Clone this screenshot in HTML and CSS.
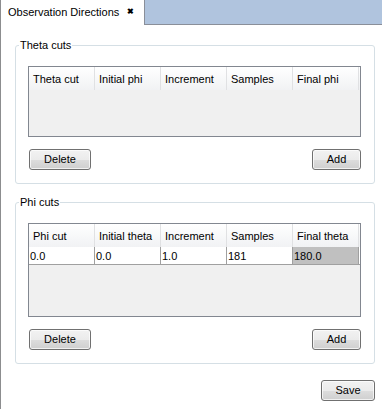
FILE: index.html
```html
<!DOCTYPE html>
<html>
<head>
<meta charset="utf-8">
<link rel="stylesheet" href="styles.css">
</head>
<body>
<div class="page">
  <div class="tabbar">
    <div class="tab">
      <span class="tab-label">Observation Directions</span>
      <span class="tab-close">✖</span>
    </div>
    <div class="tab-fill"></div>
  </div>

  <div class="content">
    <div class="group g1">
      <div class="group-title">Theta cuts</div>
      <div class="table t1">
        <div class="thead">
          <div class="th">Theta cut</div>
          <div class="th">Initial phi</div>
          <div class="th">Increment</div>
          <div class="th">Samples</div>
          <div class="th">Final phi</div>
        </div>
        <div class="tbody"></div>
      </div>
      <div class="btnrow">
        <button class="btn btn-del">Delete</button>
        <button class="btn btn-add">Add</button>
      </div>
    </div>

    <div class="group g2">
      <div class="group-title">Phi cuts</div>
      <div class="table t2">
        <div class="thead">
          <div class="th">Phi cut</div>
          <div class="th">Initial theta</div>
          <div class="th">Increment</div>
          <div class="th">Samples</div>
          <div class="th">Final theta</div>
        </div>
        <div class="trow">
          <div class="td">0.0</div>
          <div class="td">0.0</div>
          <div class="td">1.0</div>
          <div class="td">181</div>
          <div class="td td-sel">180.0</div>
        </div>
        <div class="tbody"></div>
      </div>
      <div class="btnrow">
        <button class="btn btn-del">Delete</button>
        <button class="btn btn-add">Add</button>
      </div>
    </div>

    <div class="footer">
      <button class="btn btn-save">Save</button>
    </div>
  </div>
</div>
</body>
</html>
```

FILE: styles.css
```css
* { box-sizing: border-box; }
html, body {
  margin: 0;
  padding: 0;
  background: #ffffff;
}
body {
  font-family: "Liberation Sans", Arial, sans-serif;
  font-size: 11px;
  color: #000;
}
.page {
  width: 382px;
  height: 409px;
  border-left: 1px solid #8c8d8f;
  overflow: hidden;
}
.tabbar {
  display: flex;
  height: 25px;
}
.tab {
  width: 143px;
  display: flex;
  align-items: center;
  padding: 0 0 2px 7px;
  background: #fff;
}
.tab-label {
  flex: 1;
  line-height: 14px;
}
.tab-close {
  font-size: 8px;
  font-weight: bold;
  margin-right: 10px;
  line-height: 10px;
}
.tab-fill {
  flex: 1;
  background: #b0c4de;
  border-left: 1px solid #8a8f99;
  border-bottom: 1px solid #8a8f99;
  height: 25px;
}
.content {
  padding: 20px 7px 0 14px;
}
.group {
  border: 1px solid #d5dfe5;
  border-radius: 3px;
  padding: 0 13px 13px 12px;
}
.g2 {
  margin-top: 18px;
}
.group-title {
  display: block;
  width: max-content;
  background: #fff;
  line-height: 14px;
  height: 14px;
  margin: -8px 0 0 -9px;
  padding: 0 1px;
}
.table {
  border: 1px solid #828790;
  background: #f0f0f0;
  margin-top: 14px;
  display: flex;
  flex-direction: column;
}
.t1 { height: 71px; }
.t2 { height: 94px; }
.thead {
  display: grid;
  grid-template-columns: repeat(5, 66px);
  height: 23px;
  background: linear-gradient(#ffffff, #f5f6f7 50%, #eff0f2);
}
.th {
  border-right: 1px solid #e0e1e3;
  padding: 0 0 0 4px;
  display: flex;
  align-items: center;
  background: linear-gradient(#ffffff, #f7f8f9 55%, #f1f2f4);
}
.tbody {
  flex: 1;
}
.trow {
  display: grid;
  grid-template-columns: repeat(5, 66px);
  height: 18px;
  border-bottom: 1px solid #a0a0a0;
  background: #fff;
}
.td {
  border-right: 1px solid #a0a0a0;
  padding: 0 0 0 1px;
  display: flex;
  align-items: center;
  background: #fff;
}
.td-sel {
  background: #c0c0c0;
}
.btnrow {
  display: flex;
  justify-content: space-between;
  margin-top: 12px;
}
.btn {
  font-family: "Liberation Sans", Arial, sans-serif;
  font-size: 11px;
  color: #000;
  height: 21px;
  border: 1px solid #707070;
  border-radius: 3px;
  background: linear-gradient(#f2f2f2, #ebebeb 50%, #dddddd 51%, #cfcfcf);
  box-shadow: inset 0 0 0 1px rgba(255,255,255,0.7);
  padding: 0;
  margin: 0;
  line-height: 17px;
}
.btn-del { width: 62px; margin-left: 1px; }
.btn-add { width: 49px; }
.btn-save { width: 54px; }
.footer {
  display: flex;
  justify-content: flex-end;
  margin-top: 16px;
}
```
